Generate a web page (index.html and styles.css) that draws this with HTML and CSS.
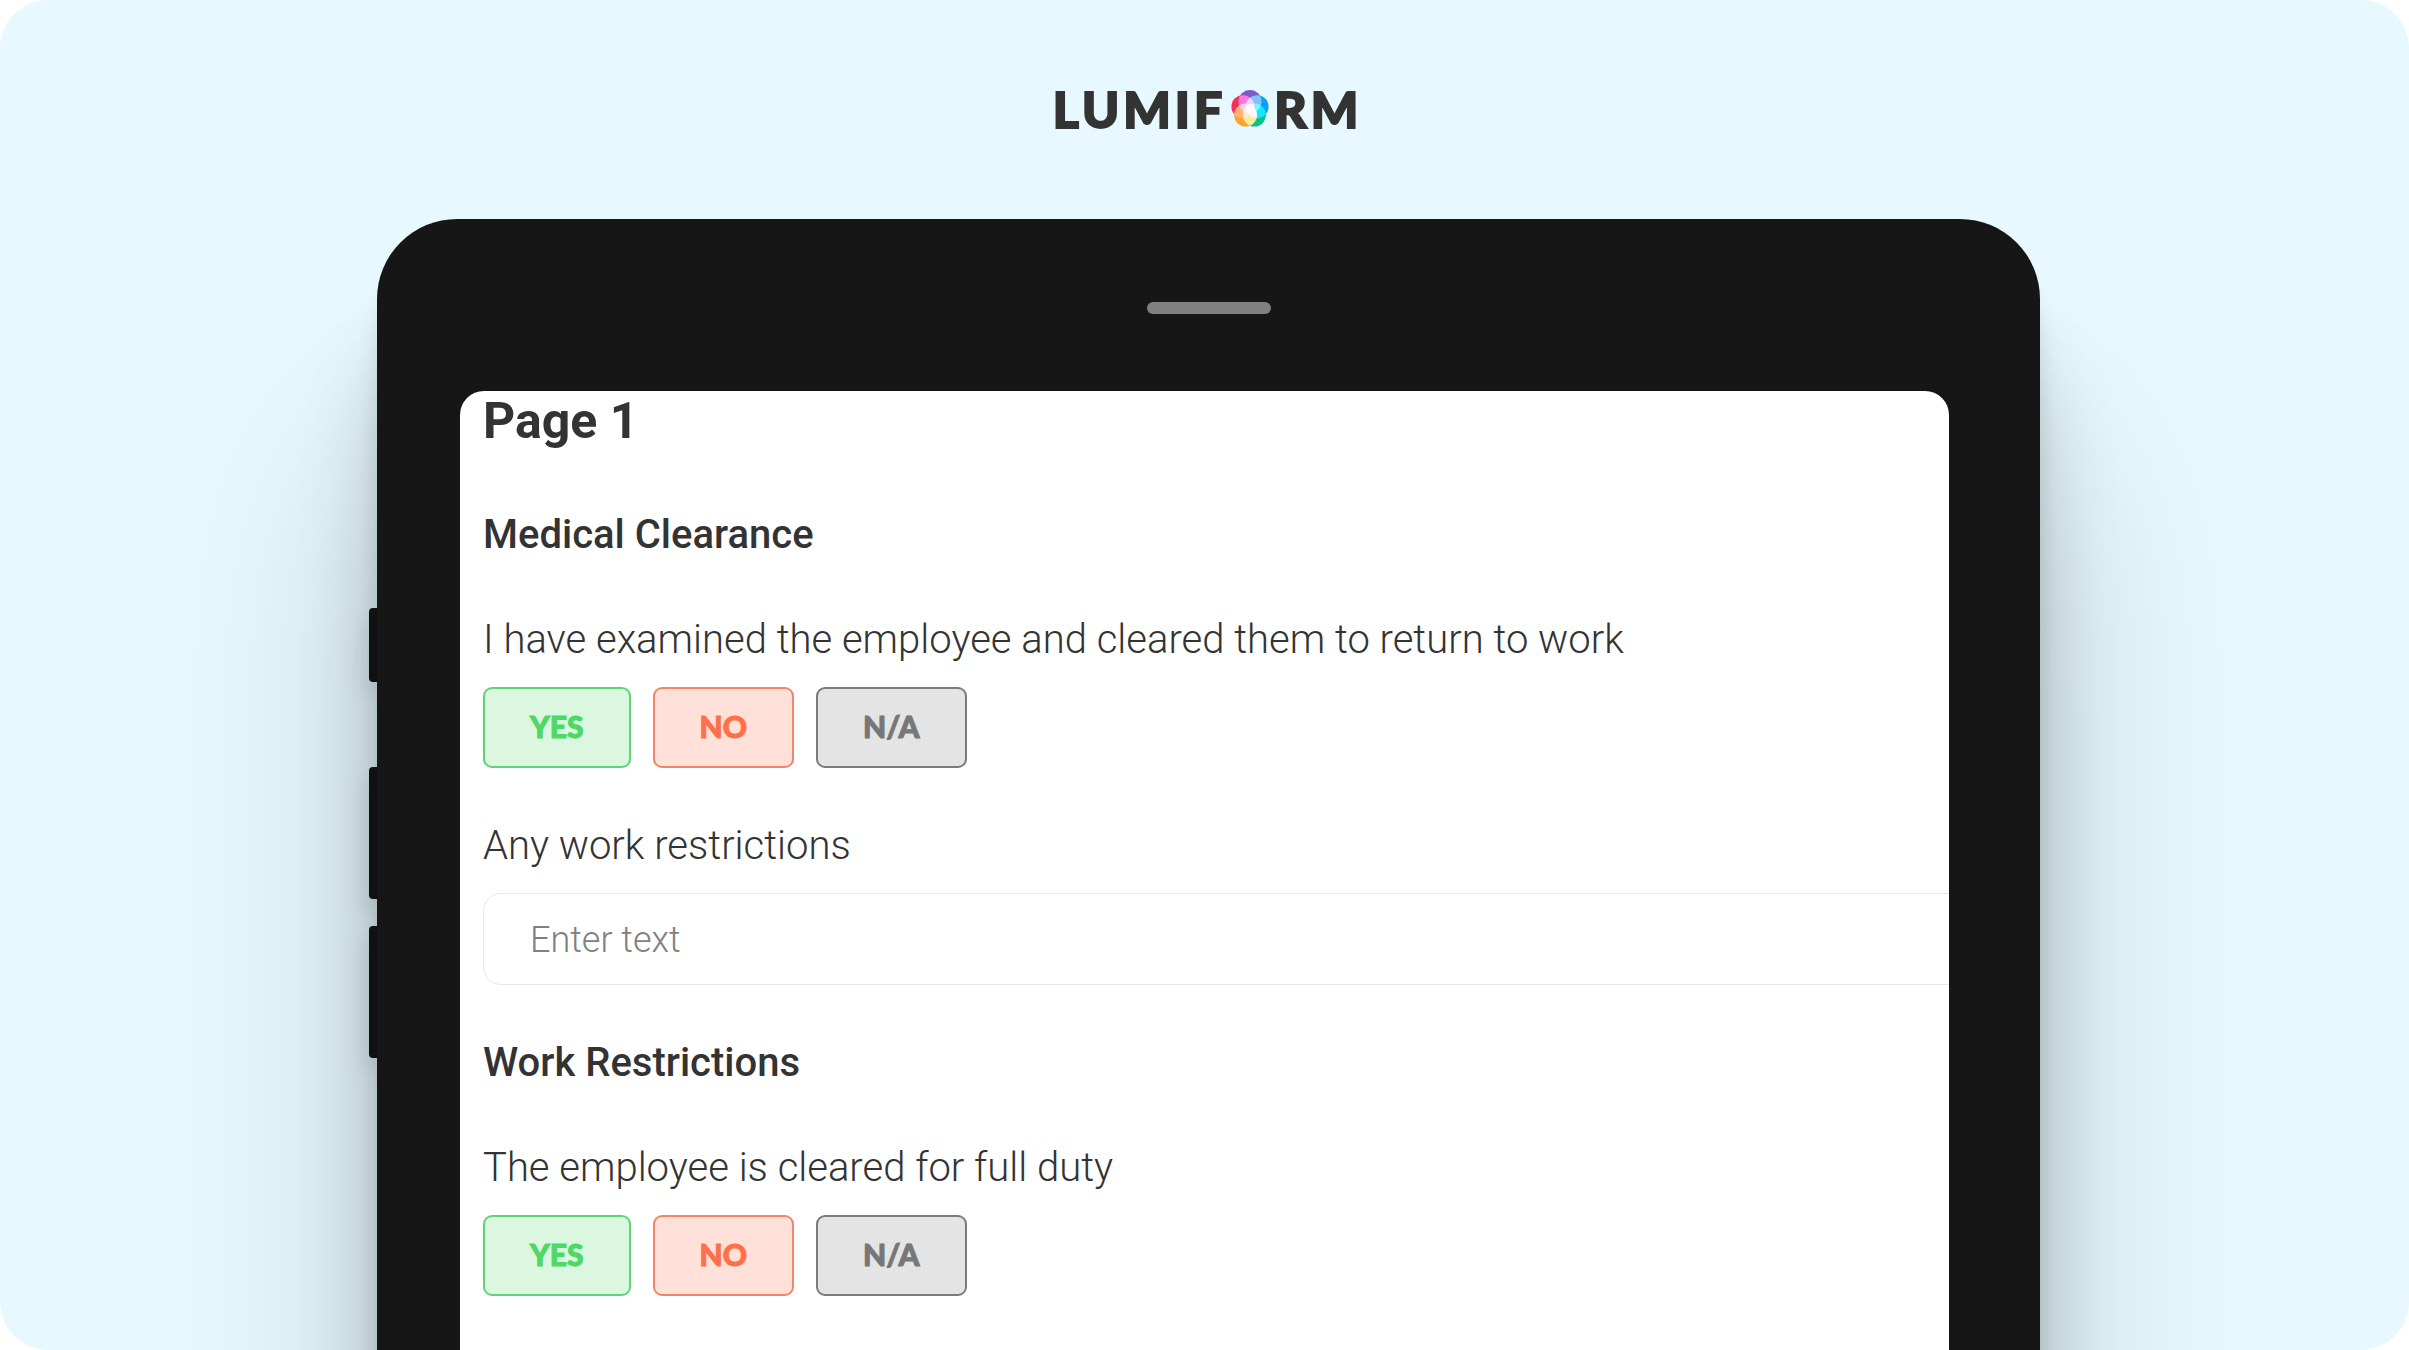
FILE: index.html
```html
<!DOCTYPE html>
<html lang="en">
<head>
  <meta charset="UTF-8" />
  <meta name="viewport" content="width=device-width, initial-scale=1.0"/>
  <title>Lumiform - Return to Work Form</title>
  <link rel="stylesheet" href="styles.css">
</head>
<body>

<div class="stage">
  <header class="logo">
    <span>LUMIF</span>
    <svg class="logo-flower" viewBox="0 0 38 38" aria-hidden="true">
      <circle class="petal" cx="19" cy="11.5" r="11.5" fill="#7c5bc8"/>
      <circle class="petal" cx="26.1" cy="16.7" r="11.5" fill="#08a2f5"/>
      <circle class="petal" cx="23.4" cy="25.1" r="11.5" fill="#0cc088"/>
      <circle class="petal" cx="14.6" cy="25.1" r="11.5" fill="#ffa42a"/>
      <circle class="petal" cx="11.9" cy="16.7" r="11.5" fill="#f72d5c"/>
    </svg>
    <span>RM</span>
  </header>

  <div class="device">
    <div class="side-keys">
      <i class="key key-short"></i>
      <i class="key"></i>
      <i class="key key-close"></i>
    </div>

    <div class="tablet">
      <div class="speaker"></div>

      <form class="screen">
        <h1>Page 1</h1>

        <h2>Medical Clearance</h2>
        <div class="question">
          <p id="q-cleared">I have examined the employee and cleared them to return to work</p>
          <div class="answers" role="group" aria-labelledby="q-cleared">
            <button type="button" class="answer yes">YES</button>
            <button type="button" class="answer no">NO</button>
            <button type="button" class="answer na">N/A</button>
          </div>
        </div>
        <div class="question">
          <label for="restrictions">Any work restrictions</label>
          <input type="text" id="restrictions" placeholder="Enter text" />
        </div>

        <h2>Work Restrictions</h2>
        <div class="question">
          <p id="q-duty">The employee is cleared for full duty</p>
          <div class="answers" role="group" aria-labelledby="q-duty">
            <button type="button" class="answer yes">YES</button>
            <button type="button" class="answer no">NO</button>
            <button type="button" class="answer na">N/A</button>
          </div>
        </div>
      </form>
    </div>
  </div>
</div>

</body>
</html>
```
FILE: styles.css
```css
* {
  box-sizing: border-box;
}
body {
  margin: 0;
  background: #fff;
  color: #333;
  font-family: Roboto, "Liberation Sans", sans-serif;
}
.stage {
  display: flex;
  flex-direction: column;
  height: 100vh;
  padding: 78px 369px 0;
  overflow: hidden;
  background: #e7f9ff;
  border-radius: 48px;
}

/* logo */
.logo {
  display: flex;
  justify-content: center;
  align-items: center;
  gap: 5px;
  height: 62px;
  margin-bottom: 79px;
  padding-left: 6px;
  font-family: Lato, sans-serif;
  font-size: 50px;
  font-weight: 900;
  line-height: 60px;
  letter-spacing: 4px;
  -webkit-text-stroke: 2px #333;
}
.logo-flower {
  width: 38px;
  height: 38px;
  isolation: isolate;
}
.petal {
  mix-blend-mode: screen;
}

/* tablet */
.device {
  display: flex;
  flex: 1;
}
.side-keys {
  width: 8px;
  padding-top: 389px;
}
.key {
  display: block;
  height: 132px;
  background: #161616;
  border-radius: 4px 0 0 4px;
  box-shadow: 0 12px 24px rgba(0,0,0,0.2);
}
.key-short {
  height: 74px;
  margin-bottom: 85px;
}
.key-close {
  margin-top: 27px;
}
.tablet {
  display: flex;
  flex: 1;
  flex-direction: column;
  margin-bottom: -400px;
  padding-top: 83px;
  background: #161616;
  border-radius: 80px;
  box-shadow:
    0 230px 220px rgba(0,0,0,0.2),
    0 120px 80px rgba(0,0,0,0.16),
    0 40px 20px rgba(0,0,0,0.1);
}
.speaker {
  width: 124px;
  height: 12px;
  margin: 0 auto 77px;
  background: #808080;
  border-radius: 6px;
}

/* form */
.screen {
  flex: 1;
  margin: 0 91px 0 83px;
  padding: 0 23px;
  overflow: hidden;
  background: #fff;
  border-radius: 24px;
}
h1 {
  margin: 0 0 60px;
  font-size: 50px;
  font-weight: 700;
  line-height: 60px;
}
h2 {
  margin: 0 0 57px;
  font-size: 40px;
  font-weight: 500;
  line-height: 48px;
}
.question {
  margin-bottom: 54px;
}
.question p, .question label {
  display: block;
  margin: 0 0 23px;
  font-size: 40px;
  font-weight: 300;
  line-height: 48px;
}
.answers {
  display: flex;
  gap: 22px;
}
.answer {
  height: 81px;
  padding: 0 45px 3px;
  border: 2px solid;
  border-radius: 9px;
  font-family: Lato, sans-serif;
  font-size: 30px;
  font-weight: 900;
  -webkit-text-stroke: 1px;
  cursor: pointer;
}
.yes {
  background: #dbf7e0;
  border-color: #5fd376;
  color: #4cd964;
}
.no {
  background: #ffe1da;
  border-color: #f58467;
  color: #ff7048;
}
.na {
  background: #e4e4e4;
  border-color: #7c7c7c;
  color: #777;
}
/* the field runs past the right edge of the screen */
input {
  display: block;
  width: calc(100% + 60px);
  height: 92px;
  padding: 2px 46px 0;
  border: 1px solid #e4e8e8;
  border-radius: 18px;
  font-family: inherit;
  font-size: 36px;
  font-weight: 300;
}
input::placeholder {
  color: #808080;
}
```
